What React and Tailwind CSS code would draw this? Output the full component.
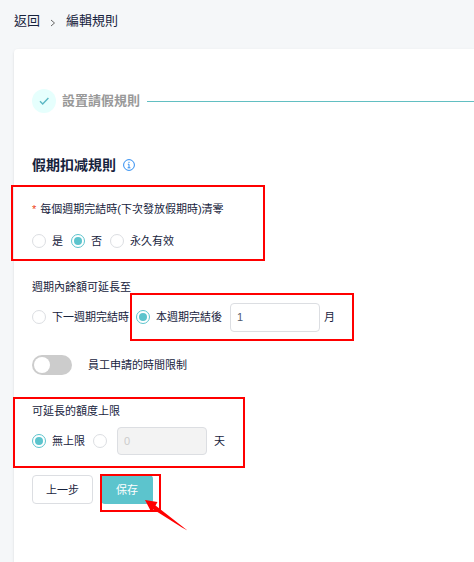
import React, { useState } from "react";

const Radio = ({ name, label, ariaLabel, checked, onChange }) => (
  <label className="flex items-center gap-1.5 whitespace-nowrap">
    <input
      type="radio"
      name={name}
      aria-label={ariaLabel}
      checked={checked}
      onChange={onChange}
      className="h-3.5 w-3.5 shrink-0 appearance-none rounded-full border border-[#dcdee2] bg-white bg-clip-content p-0.5 checked:border-[#5cc4cd] checked:bg-[#5cc4cd]"
    />
    {label}
  </label>
);

// red frame drawn around the fields the guide talks about
const Mark = ({ className }) => (
  <div className={"pointer-events-none absolute border-2 border-[#ff0000] " + className} />
);

export default function App() {
  const [clear, setClear] = useState("no");
  const [extend, setExtend] = useState("after");
  const [months, setMonths] = useState("1");
  const [limited, setLimited] = useState(false);
  const [quota, setQuota] = useState("unlimited");

  return (
    <div className="flex min-h-screen flex-col overflow-hidden bg-[#f5f7f9] pl-3.5 font-['Liberation_Sans','Noto_Sans_CJK_TC',sans-serif] text-[11px] leading-4 text-[#17233d]">
      <nav className="flex h-[49px] items-center gap-2.5 pb-2 text-[13px]">
        <a href="#back">返回</a>
        <svg className="mt-1 h-2 w-1.5" viewBox="0 0 6 8" fill="none" stroke="#666" aria-hidden="true">
          <path d="M1 1l3.5 3L1 7" />
        </svg>
        <span>編輯規則</span>
      </nav>

      <main className="flex-1 rounded-tl bg-white pl-[18px] pt-10 shadow-sm">
        <div className="flex h-6 items-center">
          <span className="flex h-6 w-6 items-center justify-center rounded-full bg-[#e6fffd]">
            <svg className="h-2.5 w-2.5" viewBox="0 0 10 10" fill="none" stroke="#5cb8c4" strokeWidth="1.4" aria-hidden="true">
              <path d="M1 5.2L3.7 8 9.4 2" />
            </svg>
          </span>
          <span className="ml-1.5 text-[13px] font-bold text-[#999]">設置請假規則</span>
          <span className="ml-[7px] h-px flex-1 bg-[#62bfc2]" />
        </div>

        <div className="mt-10 flex h-6 items-center gap-[7px]">
          <h2 className="text-sm font-bold">假期扣减規則</h2>
          <svg className="h-3 w-3" viewBox="0 0 12 12" fill="none" stroke="#2d8cf0" aria-hidden="true">
            <circle cx="6" cy="6" r="5.4" />
            <path d="M6 2.8v1.2M4.8 5.2H6v3.6M4.6 8.8h2.8" />
          </svg>
        </div>

        <div className="relative mt-6">
          <fieldset>
            <legend className="flex gap-1">
              <span className="text-[#ed4014]">*</span>
              每個週期完結時(下次發放假期時)清零
            </legend>
            <div className="mt-4 flex items-center gap-2">
              <Radio name="clear" label="是" checked={clear === "yes"} onChange={() => setClear("yes")} />
              <Radio name="clear" label="否" checked={clear === "no"} onChange={() => setClear("no")} />
              <Radio name="clear" label="永久有效" checked={clear === "forever"} onChange={() => setClear("forever")} />
            </div>
          </fieldset>
          <Mark className="-left-[21px] -top-4 h-[76px] w-[254px]" />
        </div>

        <fieldset className="mt-[30px]">
          <legend>週期內餘額可延長至</legend>
          <div className="mt-2 flex h-7 items-center">
            <Radio name="extend" label="下一週期完結時" checked={extend === "next"} onChange={() => setExtend("next")} />
            <div className="relative ml-[7px] flex items-center">
              <Radio name="extend" label="本週期完結後" checked={extend === "after"} onChange={() => setExtend("after")} />
              <input
                type="text"
                aria-label="月"
                value={months}
                onChange={(e) => setMonths(e.target.value)}
                className="ml-2 h-[29px] w-[90px] rounded border border-[#dcdee2] px-1.5 text-[#515a6e]"
              />
              <span className="ml-1">月</span>
              <Mark className="-left-1.5 -top-2.5 h-12 w-56" />
            </div>
          </div>
        </fieldset>

        <label className="mt-6 flex h-5 items-center gap-4">
          <input
            type="checkbox"
            role="switch"
            checked={limited}
            onChange={(e) => setLimited(e.target.checked)}
            className="h-5 w-10 appearance-none rounded-full bg-[#ccc] p-0.5 before:block before:h-4 before:w-4 before:rounded-full before:bg-white checked:bg-[#5cc4cd] checked:before:translate-x-5"
          />
          員工申請的時間限制
        </label>

        <div className="relative mt-7">
          <fieldset>
            <legend>可延長的額度上限</legend>
            <div className="mt-2 flex h-7 items-center">
              <Radio name="quota" label="無上限" checked={quota === "unlimited"} onChange={() => setQuota("unlimited")} />
              <div className="ml-2 flex items-center gap-2.5">
                <Radio name="quota" ariaLabel="天" checked={quota === "days"} onChange={() => setQuota("days")} />
                <input
                  type="text"
                  aria-label="額度"
                  defaultValue="0"
                  disabled={quota !== "days"}
                  className="h-7 w-[90px] rounded border border-[#dcdee2] px-1.5 disabled:bg-[#f3f3f3] disabled:text-[#ccc]"
                />
              </div>
              <span className="ml-[7px]">天</span>
            </div>
          </fieldset>
          <Mark className="-left-[19px] -top-1.5 h-[71px] w-[232px]" />
        </div>

        <div className="mt-5 flex gap-2">
          <button type="button" className="h-[29px] rounded border border-[#dcdee2] bg-white px-[13px]">
            上一步
          </button>
          <div className="relative">
            <button type="button" className="h-[29px] rounded bg-[#5cc4cd] px-[15px] text-white">
              保存
            </button>
            <Mark className="-left-px -top-px h-[38px] w-[61px]" />
            <svg className="absolute left-11 top-[25px] h-8 w-11" viewBox="0 0 44 32" fill="#ff0000" aria-hidden="true">
              <path d="M0 0L12.5 2L10.5 5.5L42.5 30.5L37 27.5L8.5 9.5L6 11.5Z" />
            </svg>
          </div>
        </div>
      </main>
    </div>
  );
}
